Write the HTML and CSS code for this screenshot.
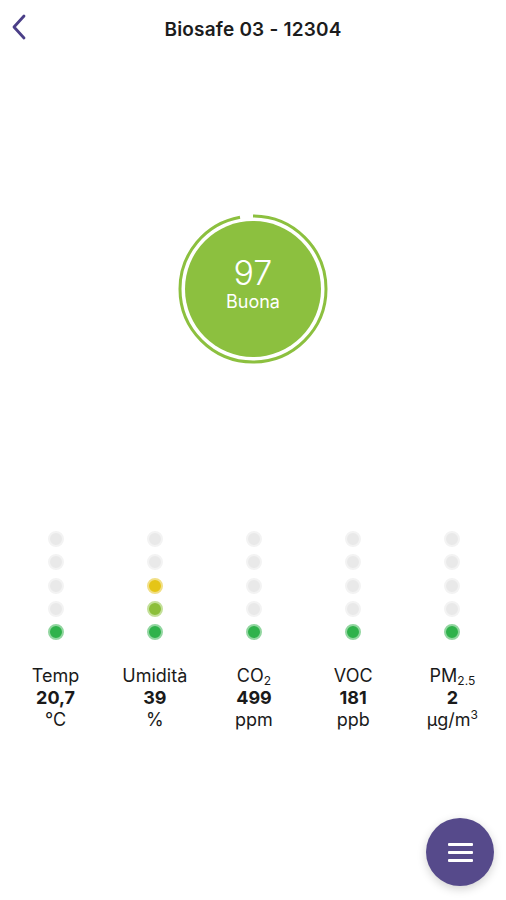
FILE: index.html
```html
<!DOCTYPE html>
<html lang="it">

<head>
    <meta charset="UTF-8" />
    <meta name="viewport" content="width=device-width, initial-scale=1.0" />
    <title>Biosafe 03 - 12304</title>
    <link rel="stylesheet" href="styles.css">
</head>

<body>
    <div class="screen">
        <header class="topbar">
            <button class="back" aria-label="Indietro">
                <svg width="16" height="26" viewBox="0 0 16 26">
                    <path d="M13 2 L3 13 L13 24" fill="none" stroke="#4b3f88" stroke-width="2.8"
                        stroke-linecap="round" stroke-linejoin="round" />
                </svg>
            </button>
            <h1>Biosafe 03 - 12304</h1>
        </header>

        <section class="score">
            <div class="gauge">
                <svg width="154" height="154" viewBox="0 0 154 154">
                    <circle class="ring" cx="77" cy="77" r="73" />
                    <circle class="fill" cx="77" cy="77" r="68" />
                </svg>
                <div class="gauge-text">
                    <span class="value">97</span>
                    <span class="label">Buona</span>
                </div>
            </div>
        </section>

        <section class="sensors">
            <div class="sensor">
                <ul class="levels">
                    <li></li><li></li><li></li><li></li><li class="green"></li>
                </ul>
                <p class="name">Temp</p>
                <p class="reading">20,7</p>
                <p class="unit">°C</p>
            </div>
            <div class="sensor">
                <ul class="levels">
                    <li></li><li></li><li class="yellow"></li><li class="lime"></li><li class="green"></li>
                </ul>
                <p class="name">Umidità</p>
                <p class="reading">39</p>
                <p class="unit">%</p>
            </div>
            <div class="sensor">
                <ul class="levels">
                    <li></li><li></li><li></li><li></li><li class="green"></li>
                </ul>
                <p class="name">CO<sub>2</sub></p>
                <p class="reading">499</p>
                <p class="unit">ppm</p>
            </div>
            <div class="sensor">
                <ul class="levels">
                    <li></li><li></li><li></li><li></li><li class="green"></li>
                </ul>
                <p class="name">VOC</p>
                <p class="reading">181</p>
                <p class="unit">ppb</p>
            </div>
            <div class="sensor">
                <ul class="levels">
                    <li></li><li></li><li></li><li></li><li class="green"></li>
                </ul>
                <p class="name">PM<sub>2.5</sub></p>
                <p class="reading">2</p>
                <p class="unit">µg/m<sup>3</sup></p>
            </div>
        </section>

        <button class="fab" aria-label="Menu">
            <span></span><span></span><span></span>
        </button>
    </div>
</body>

</html>
```

FILE: styles.css
```css
* {
    box-sizing: border-box;
}

body {
    margin: 0;
    background: #fff;
    font-family: Inter, "Liberation Sans", sans-serif;
    color: #1a1a1a;
}

.screen {
    position: relative;
    width: 506px;
    height: 900px;
    overflow: hidden;
}

.topbar {
    height: 58px;
    display: flex;
    align-items: center;
    justify-content: center;
    position: relative;
}

.topbar h1 {
    margin: 0;
    font-size: 19px;
    font-weight: 600;
    color: #1c1c1c;
    letter-spacing: 0.2px;
}

.back {
    position: absolute;
    left: 11px;
    top: 14px;
    padding: 0;
    border: none;
    background: none;
    display: flex;
}

.score {
    margin-top: 154px;
    display: flex;
    justify-content: center;
}

.gauge {
    width: 154px;
    height: 154px;
    position: relative;
}

.gauge svg {
    display: block;
    transform: rotate(-90deg);
}

.gauge .ring {
    fill: none;
    stroke: #8cc03f;
    stroke-width: 3;
    /* 97% of 2*pi*73 */
    stroke-dasharray: 444.9 13.8;
}

.gauge .fill {
    fill: #8cc03f;
}

.gauge-text {
    position: absolute;
    inset: 0;
    display: flex;
    flex-direction: column;
    align-items: center;
    justify-content: center;
    color: #fff;
}

.gauge-text .value {
    font-size: 34px;
    font-weight: 300;
    line-height: 36px;
    margin-top: -10px;
}

.gauge-text .label {
    font-size: 18px;
    line-height: 22px;
}

.sensors {
    margin-top: 165px;
    padding: 0 4px 0 6px;
    display: grid;
    grid-template-columns: repeat(5, 1fr);
}

.sensor {
    display: flex;
    flex-direction: column;
    align-items: center;
}

.levels {
    margin: 0 0 25px;
    padding: 0;
    list-style: none;
    display: flex;
    flex-direction: column;
    gap: 7.3px;
}

.levels li {
    width: 16px;
    height: 16px;
    border-radius: 50%;
    background: #e9e9e9;
    border: 2px solid #f3f3f3;
}

.levels li.green {
    background: #2fb24b;
    border-color: #92d6a0;
}

.levels li.lime {
    background: #8cbf3a;
    border-color: #c4e09a;
}

.levels li.yellow {
    background: #e5c516;
    border-color: #f1df86;
}

.sensor p {
    margin: 0;
    font-size: 18px;
    line-height: 22px;
    color: #1a1a1a;
    white-space: nowrap;
}

.sensor .reading {
    font-weight: 700;
}

.sensor sub {
    font-size: 12px;
    vertical-align: -3px;
    line-height: 0;
}

.sensor sup {
    font-size: 12px;
    vertical-align: 7px;
    line-height: 0;
}

.fab {
    position: absolute;
    right: 12px;
    bottom: 14px;
    width: 68px;
    height: 68px;
    border-radius: 50%;
    border: none;
    background: #564a8b;
    box-shadow: 0 3px 10px rgba(0, 0, 0, 0.18);
    display: flex;
    flex-direction: column;
    align-items: center;
    justify-content: center;
    gap: 5px;
    padding: 0;
}

.fab span {
    width: 25px;
    height: 3px;
    border-radius: 1px;
    background: #fff;
}
```
